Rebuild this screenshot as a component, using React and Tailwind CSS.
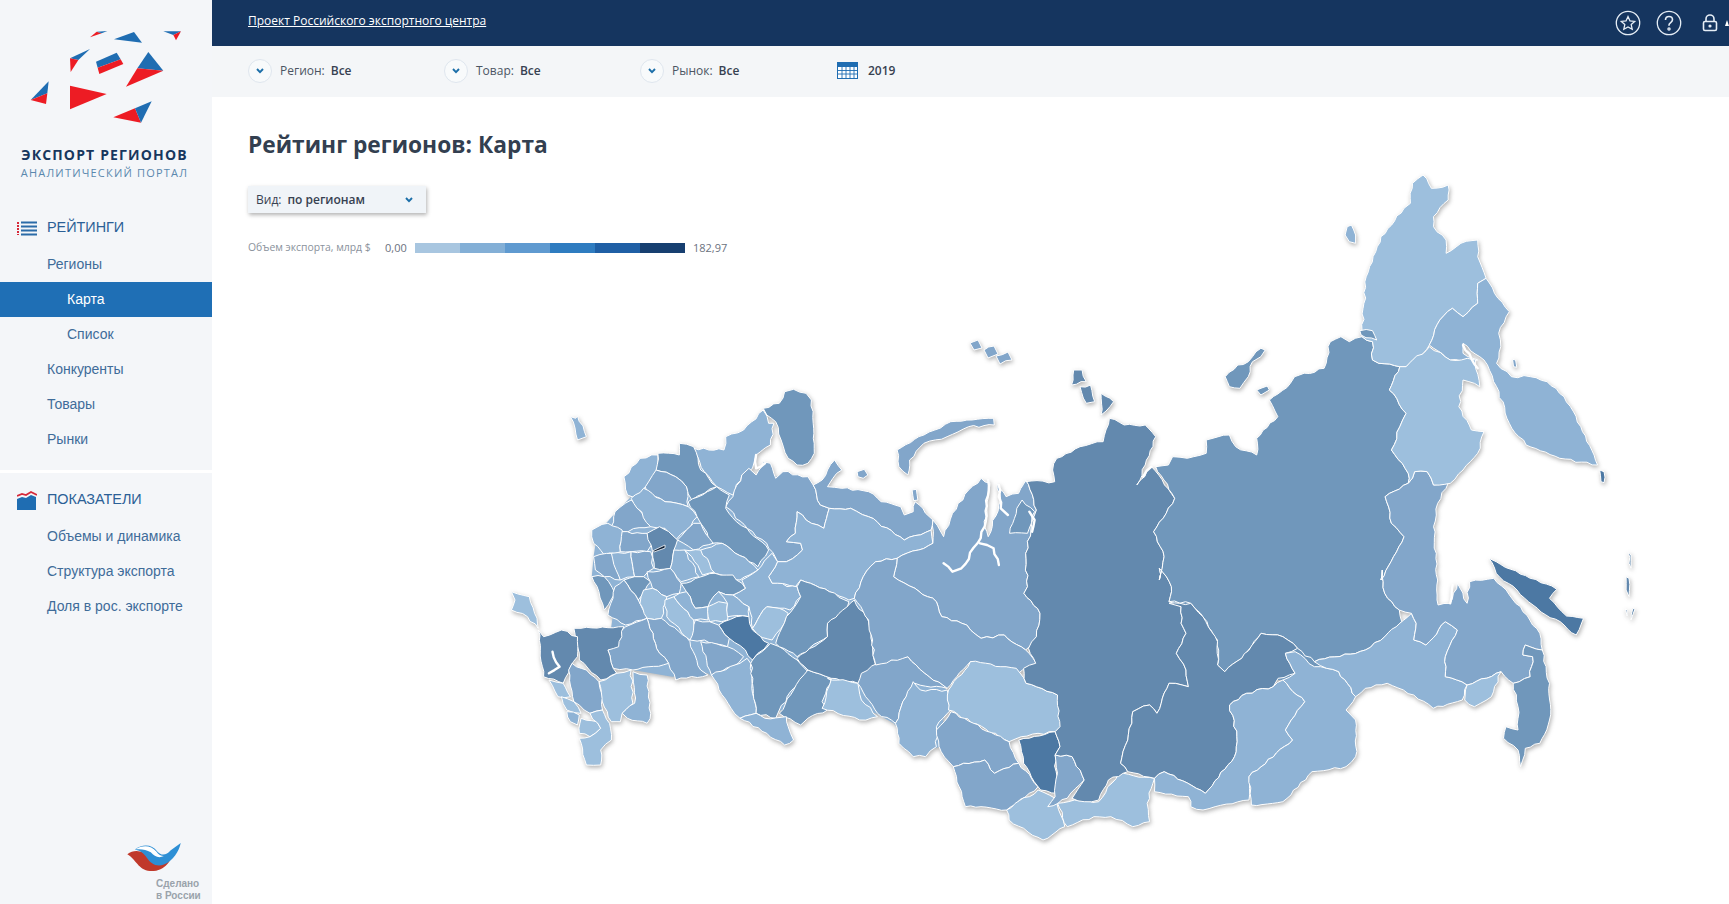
const toPts = (s, ox, oy, sx, sy = 3) =>
  s.trim().split(/\s+/).map((pair) => {
    const [x, y] = pair.split(",").map(Number);
    return [ox + x / sx, oy + y / sy];
  });
const W = (s) => toPts(s, 490, 380, 2.8);
const N = (s) => toPts(s, 1000, 160, 2.376);
const S = (s) => toPts(s, 900, 540, 2.063);
const P = (s) => toPts(s, 0, 0, 1, 1);

// roughen an edge so that two regions sharing it get the same wiggle
const noise = (n) => {
  const v = Math.sin(n * 12.9898) * 43758.5453;
  return v - Math.floor(v);
};
const roughEdge = (a, b, amp) => {
  const flip = a[0] > b[0] || (a[0] === b[0] && a[1] > b[1]);
  const [p, q] = flip ? [b, a] : [a, b];
  const dx = q[0] - p[0];
  const dy = q[1] - p[1];
  const len = Math.hypot(dx, dy);
  const steps = Math.floor(len / 5);
  const seed = p[0] * 3.1 + p[1] * 7.3 + q[0] * 11.7 + q[1] * 17.9;
  const out = [];
  for (let i = 1; i < steps; i++) {
    const t = i / steps;
    const off = (noise(seed + i) - 0.5) * 2 * amp;
    out.push([p[0] + dx * t - (dy / len) * off, p[1] + dy * t + (dx / len) * off]);
  }
  return flip ? out.reverse() : out;
};
const rough = (pts, closed = true, amp = 1.3) => {
  const out = [];
  const count = closed ? pts.length : pts.length - 1;
  for (let i = 0; i < count; i++) {
    const a = pts[i];
    const b = pts[(i + 1) % pts.length];
    out.push(a, ...roughEdge(a, b, amp));
  }
  if (!closed) out.push(pts[pts.length - 1]);
  return out.map(([x, y]) => `${x.toFixed(1)},${y.toFixed(1)}`).join(" ");
};

const L = "#9dbfdd";
const M1 = "#8fb3d5";
const M2 = "#82a6ca";
const D1 = "#7097bb";
const D2 = "#6389ae";
const D3 = "#4c78a3";

// fills what is left between neighbouring regions
const underlay = [
  [M1, W("300,460 350,400 395,350 430,300 480,240 560,220 640,330 700,300 770,280 900,320 930,380 1200,520 1100,800 1280,930 1260,1100 1200,1120 1130,1030 1080,1000 950,980 880,1010 810,990 800,1010 745,1000 610,880 510,890 400,870 340,860 330,810 345,700 285,590 290,530")],
  [D1, P("1030,500 1380,500 1380,680 1030,680")],
];

const regions = [
  // north-west
  [M1, W("225,110 240,115 245,108 270,170 245,180")],
  [D1, W("765,85 810,70 825,35 850,28 885,40 900,60 905,130 908,220 890,250 860,255 835,235 815,180 800,125 775,105")],
  [M1, W("570,205 655,210 660,170 710,150 765,90 780,130 795,130 785,195 745,225 735,265 705,285 680,345 635,320 600,275")],
  [M2, W("660,380 680,350 705,285 725,265 745,285 765,245 785,250 800,295 820,275 890,290 905,315 925,375 950,385 935,445 900,430 860,395 855,460 830,485 870,490 875,510 830,545 805,545 775,490 720,445")],
  [M2, W("905,315 930,300 945,270 965,240 985,270 960,295 945,320 985,325 1060,335 1095,365 1150,380 1160,405 1185,395 1190,365 1240,420 1235,450 1160,480 1060,410 1010,385 950,385 925,375")],
  [M1, W("950,385 1010,385 1060,410 1160,480 1235,450 1240,490 1200,510 1140,535 1080,545 1045,590 1020,655 1005,660 950,635 870,600 855,620 790,610 780,590 805,545 830,545 875,510 870,490 830,485 855,460 860,395 900,430 935,445")],
  [M2, W("1140,210 1215,165 1290,125 1410,115 1412,135 1340,140 1280,170 1215,190 1175,240 1170,285 1145,260")],
  [M2, W("1028,275 1048,268 1058,285 1045,295 1030,290")],
  [M2, W("1182,330 1194,328 1198,360 1186,362")],
  [M1, W("375,290 420,235 470,225 470,275 435,320 410,355 385,345")],
  [D1, W("470,220 530,225 530,190 570,200 590,270 635,320 600,340 565,360 550,320 520,290 465,270")],
  [M2, W("435,320 465,270 520,290 550,320 555,380 490,365 440,340")],
  [M2, W("340,440 350,395 395,360 440,420 450,440 370,455")],
  [M1, W("395,355 430,325 490,365 555,380 580,410 550,450 520,480 490,445 450,440")],
  [D1, W("555,365 635,320 670,345 660,385 690,425 720,445 780,510 750,560 725,545 650,490 620,490 590,430 580,410")],
  [M2, W("525,480 550,450 570,430 590,430 625,490 570,510")],
  [M1, W("285,450 330,430 370,450 365,515 320,525 290,490")],
  [M2, W("370,455 440,460 455,490 440,515 395,515 365,515")],
  [D2, W("440,460 475,440 510,465 525,480 515,510 505,565 460,565 455,515")],
  [M2, W("290,530 345,520 365,600 320,590 295,570")],
  [M1, W("340,520 395,515 405,590 365,600")],
  [M2, W("395,515 450,515 458,565 430,590 405,590")],
  [M1, W("515,510 545,510 585,590 535,605 505,565")],
  [L, W("545,510 590,510 635,575 595,585 565,530")],
  [M1, W("590,510 650,490 725,545 750,570 700,600 630,580")],
  [M1, W("780,590 805,545 790,520 750,570 705,600 715,625 680,645 725,680 735,745 775,680 840,690 870,650 860,620 790,610")],
  [D1, W("285,590 320,590 350,640 320,690 305,635")],
  [D1, W("375,600 405,590 430,590 450,605 415,660")],
  [M2, W("440,575 505,565 535,610 530,640 495,650 455,625")],
  [M2, W("350,620 375,600 415,660 440,715 380,735 330,705")],
  [L, W("430,630 455,625 495,650 480,715 440,715 420,670")],
  [D1, W("535,610 630,580 680,585 715,625 680,645 640,635 610,680 575,685 550,635")],
  [L, W("490,660 515,650 570,720 575,765 560,780 495,710")],
  [M1, W("515,650 550,635 575,685 610,680 610,720 570,720")],
  [L, W("610,680 640,665 665,670 665,720 615,725")],
  [M1, W("640,635 680,645 725,680 725,710 665,710 665,670")],
  [L, W("735,745 775,680 810,685 835,700 815,745 790,780 750,765")],
  [D3, W("640,735 690,710 725,710 735,750 780,790 750,820 735,840 715,810 670,775")],
  [M2, W("575,720 615,725 640,735 670,775 665,800 600,780 560,780")],
  // south
  [M2, W("440,715 480,715 560,785 590,870 610,885 520,900 500,850 475,820")],
  [M2, W("330,810 380,740 440,715 475,820 500,850 400,870 345,865")],
  [D2, W("245,800 235,745 255,745 375,740 360,800 330,810 345,865 355,880 310,900 250,840")],
  [D2, W("135,750 150,770 200,750 245,770 245,830 225,860 205,910 150,890")],
  [L, W("60,635 110,650 125,700 135,745 105,710 60,690 70,660")],
  [L, W("305,905 355,880 395,870 400,970 370,1000 365,1025 340,1025 310,950")],
  [M1, W("400,875 440,885 450,1000 440,1030 385,1015 370,1000 405,970")],
  [M2, W("220,870 230,850 270,870 305,905 315,990 280,1000 235,965")],
  [L, W("165,900 205,910 225,950 190,950")],
  [L, W("200,950 235,965 255,1000 215,990")],
  [M1, W("215,995 250,1005 245,1035 225,1025")],
  [L, W("255,1015 300,1025 310,1045 280,1070 250,1060")],
  [L, W("280,1000 315,990 335,1030 340,1080 310,1110 310,1155 270,1155 250,1075 280,1070 310,1045")],
  // volga and urals
  [M2, W("590,785 665,800 710,830 695,850 620,885")],
  [M1, W("620,885 700,850 720,835 730,850 735,940 745,1000 700,1015 675,985")],
  [D1, W("730,850 735,840 785,790 810,800 860,840 890,875 880,900 850,925 810,990 800,1015 745,1000")],
  [D1, W("890,870 955,895 940,940 930,965 945,990 890,1015 870,1035 810,1000 850,930")],
  [M1, W("700,1015 745,1000 770,1015 830,1010 835,1040 850,1080 825,1095 775,1060")],
  [D1, W("810,800 800,790 830,710 870,650 860,620 870,600 950,635 1005,665 990,700 945,730 945,770 860,830")],
  [D2, W("860,835 945,770 945,730 1020,660 1060,725 1080,855 1030,910 955,895 890,870")],
  [L, W("945,895 1030,910 1040,960 1085,1010 1035,1020 930,985 955,900")],
  [M2, W("1030,910 1040,880 1085,850 1170,830 1230,890 1280,925 1190,910 1165,950 1135,1030 1085,1000")],
  [M1, W("1135,1030 1165,950 1185,905 1205,930 1280,930 1290,990 1250,1040 1250,1100 1220,1130 1185,1130 1145,1090")],
  // west siberia
  [M2, W("1240,420 1270,470 1295,400 1340,330 1375,295 1400,310 1385,440 1395,470 1430,360 1420,310 1445,350 1480,340 1500,300 1530,390 1515,450 1500,520 1505,620 1495,640 1540,700 1530,770 1500,810 1440,765 1375,775 1335,735 1265,710 1250,665 1190,625 1130,590 1140,535 1200,510 1240,490")],
  [D1, W("1475,385 1490,360 1525,395 1505,460 1455,460")],
  [M2, W("1020,655 1045,590 1080,545 1140,535 1130,590 1190,625 1250,665 1265,710 1335,735 1375,775 1440,765 1500,810 1530,850 1480,880 1500,905 1345,845 1280,925 1230,890 1170,830 1080,855 1060,720")],
  [L, S("100,450 145,365 240,385 260,430 325,465 335,560 320,575 250,590 225,605 100,510")],
  [M2, S("75,570 105,515 225,605 245,670 195,700 175,660 110,680 85,635")],
  [M2, S("110,680 175,660 195,700 245,670 285,740 220,810 135,800")],
  [L, S("220,810 285,750 320,775 340,860 295,900 225,840")],
  [D3, S("245,600 320,575 330,620 320,645 325,760 290,750 255,670")],
  [M2, S("320,645 355,650 380,720 345,775 305,800 320,770 325,700")],
  [L, S("325,790 360,780 410,785 450,700 525,715 510,790 515,845 480,860 435,830 400,830 345,860")],
  // krasnoyarsk
  [D2, [
    ...N("60,965 130,965 125,930 135,895 190,860 245,845 260,775 295,795 345,795 370,830 345,915 325,975 360,920 415,1015 395,1060 365,1115 390,1190"),
    ...S("535,120 535,85 560,140 555,185 580,200 580,250 590,280 570,340 590,390 595,440 555,430 530,520 515,495 480,515 470,600 455,670 470,695 430,720 410,780 380,785 355,775 380,720 355,650 320,645 330,620 320,575 330,560 325,465 260,430 255,385 280,370 265,325"),
    ...W("1530,770 1540,700 1495,640 1505,620 1500,520 1515,450 1530,390 1500,300"),
  ]],
  // yakutia
  [D1, [
    ...N("370,920 400,915 410,890 445,895 490,880 490,840 545,825 560,860 610,885 610,835 660,770 640,720 690,670 700,650 770,625 785,545 810,530 830,545 860,530 885,545 885,600 900,610 950,620 925,690 965,760 950,800 930,870 970,940 970,970 915,1010 930,1090 960,1130 935,1190 905,1260"),
    ...S("995,90 1000,160 1030,210 1035,245 1000,290 960,330 855,365 820,325 790,290 745,280 725,320 705,355 670,395 655,375 655,300 620,220 600,190 555,185 560,140 535,85 535,120"),
    ...N("390,1190 365,1115 395,1060 415,1015"),
  ]],
  [D2, S("555,190 600,190 625,230 655,305 655,375 670,395 705,355 745,280 790,290 820,325 795,340 815,400 780,415 770,440 715,460 680,495 695,590 690,650 630,760 545,695 525,715 470,695 455,670 470,600 480,515 515,495 530,520 555,430 595,440 590,390 570,340 590,280 580,250 580,200")],
  [M1, S("525,715 545,695 630,760 690,650 695,590 680,495 715,460 770,440 790,420 835,485 795,570 810,600 720,710 720,780 650,800 625,810 600,800 595,770 525,755")],
  [M1, S("720,710 810,600 795,570 835,485 790,420 815,400 795,340 815,335 855,380 880,385 905,395 940,470 920,510 940,540 940,650 920,680 850,695 790,785 725,795")],
  [M1, S("855,365 960,330 1000,290 1055,220 1065,250 1060,300 1085,315 1125,245 1150,270 1125,350 1125,410 1170,435 1160,480 1100,505 1060,465 1005,430 960,445 940,470 905,395 880,385")],
  // far east
  [M2, [
    ...N("905,1260 935,1190 960,1130 930,1090 915,1010 970,970 985,935 1015,935 1030,975 1065,970 1040,1030 1030,1100 1040,1260"),
    ...S("1110,195 1135,190 1150,130 1170,190 1175,125 1225,115 1280,200 1320,280 1325,330 1290,315 1285,345 1305,350 1300,410 1265,430 1240,395 1170,435 1125,410 1125,350 1150,270 1125,245 1085,315 1060,300 1065,250 1055,220 1030,210 1000,160 995,90"),
  ]],
  [L, S("1170,435 1240,395 1220,470 1185,500 1165,480")],
  [D1, S("1265,430 1300,410 1305,350 1285,345 1290,315 1325,330 1340,430 1340,540 1320,610 1290,625 1280,680 1275,630 1245,595 1250,560 1275,570 1275,500")],
  [D3, S("1215,55 1230,65 1300,115 1355,148 1340,175 1375,228 1410,235 1395,285 1370,255 1315,205 1255,130 1230,100")],
  [L, N("860,510 870,350 905,230 960,145 975,130 980,70 1005,45 1025,85 1065,75 1065,120 1030,170 1030,200 1060,240 1060,280 1095,250 1135,240 1135,290 1155,355 1135,370 1135,430 1100,470 1075,445 1045,480 1020,555 995,590 965,620 950,620 900,610 885,600 885,545 860,530")],
  [D1, N("855,512 885,512 895,540 858,525")],
  [M1, N("1155,355 1175,400 1210,455 1185,520 1190,560 1180,610 1215,650 1260,650 1300,665 1340,710 1380,800 1420,915 1330,895 1250,855 1210,790 1180,680 1150,600 1100,550 1100,580 1135,600 1070,600 1020,555 1045,480 1075,445 1100,470 1135,430 1135,370")],
  [L, N("950,620 965,620 1020,560 1070,600 1110,595 1130,600 1130,625 1140,680 1100,660 1090,740 1120,810 1150,815 1135,880 1100,930 1070,970 1030,975 1015,935 985,935 970,970 970,940 930,870 950,800 965,760 925,690")],
  // islands
  [M1, N("825,200 835,195 845,225 845,250 830,245 820,225")],
  [D1, N("535,650 565,615 590,605 600,590 620,565 630,570 620,590 600,605 590,650 570,685 545,680")],
  [D1, N("610,690 635,678 640,690 620,705")],
  [D2, N("175,630 195,630 205,665 170,675")],
  [D2, N("190,680 215,675 225,725 205,730")],
  [D2, N("240,700 270,725 240,765")],
  [M2, N("1218,598 1225,600 1228,622 1220,620")],
  [D3, N("1425,930 1435,935 1435,968 1428,965")],
  [M2, P("970,343 978,340 982,348 974,350")],
  [M2, P("984,350 994,346 998,354 988,358")],
  [M2, P("996,356 1008,352 1012,360 1000,364")],
  [D2, S("1502,35 1508,45 1508,85 1504,70")],
  [D2, S("1498,110 1504,115 1504,170 1498,150")],
  [D2, S("1496,205 1500,210 1500,228")],
  [D2, S("1512,205 1516,208 1508,240")],
];

// white inlets: gulfs cut out of the regions
const inlets = [
  W("1395,300 1385,440 1365,490 1320,565 1295,575 1270,550"),
  W("1372,490 1410,505 1425,555"),
  W("1425,315 1430,385 1450,405"),
  W("1510,395 1525,420 1518,455"),
  W("175,815 195,860 165,880"),
  W("745,225 745,265 770,250"),
  N("1100,555 1135,625"),
  S("1140,135 1135,190"),
  N("360,920 340,950"),
];

function LogoTriangles() {
  return (
    <svg className="block w-[212px] h-[130px]" viewBox="0 0 636 390">
      <polygon points="270,112 290,95 305,100" fill="#ed1c24" />
      <polygon points="290,95 322,93 305,100" fill="#1f6db2" />
      <polygon points="342,118 402,96 426,128" fill="#1f6db2" />
      <polygon points="490,94 543,94 520,105" fill="#1f6db2" />
      <polygon points="520,105 543,94 528,121" fill="#ed1c24" />
      <polygon points="210,175 270,147 235,180" fill="#1f6db2" />
      <polygon points="210,175 235,180 212,216" fill="#ed1c24" />
      <polygon points="288,185 350,158 362,178 293,203" fill="#1f6db2" />
      <polygon points="293,203 362,178 370,192 298,222" fill="#ed1c24" />
      <polygon points="445,156 490,212 412,205" fill="#1f6db2" />
      <polygon points="412,205 490,212 378,260" fill="#ed1c24" />
      <polygon points="92,300 146,244 142,280" fill="#1f6db2" />
      <polygon points="92,300 142,280 138,312" fill="#ed1c24" />
      <polygon points="210,257 320,282 210,328" fill="#ed1c24" />
      <polygon points="340,352 405,325 423,368" fill="#ed1c24" />
      <polygon points="405,325 455,304 423,368" fill="#1f6db2" />
    </svg>
  );
}

function ListIcon() {
  return (
    <svg width="20" height="15" viewBox="0 0 20 15">
      <path d="M1 1v13" stroke="#d6293a" strokeWidth="2" strokeDasharray="2 1" />
      <path d="M4 1.5h16M4 5.5h16M4 9.5h16M4 13.5h16" stroke="#2a6ba8" strokeWidth="2.2" />
    </svg>
  );
}

function ChartIcon() {
  return (
    <svg width="20" height="20" viewBox="0 0 20 20">
      <path d="M0 6l5-2 4 1 5-3 6 3" fill="none" stroke="#d6293a" strokeWidth="1.8" />
      <path d="M0 9l5-2 4 1 5-3 5 2v13H0z" fill="#1f6db2" />
    </svg>
  );
}

function Chevron() {
  return (
    <svg width="8" height="6" viewBox="0 0 8 6">
      <path d="M1 1l3 3.2L7 1" fill="none" stroke="#1b6ea8" strokeWidth="1.9" />
    </svg>
  );
}

function Filter({ label }) {
  return (
    <div className="w-[196px] flex items-center">
      <span className="w-[24px] h-[24px] rounded-full border border-[#dfe6ee] bg-[#f8fafb] flex items-center justify-center mr-[8px]">
        <Chevron />
      </span>
      <span className="text-[#4b5563]">{label}:</span>
      <span className="ml-[6px] font-semibold text-[#374151]">Все</span>
    </div>
  );
}

function NavItem({ children, active, sub }) {
  return (
    <a
      className={
        "h-[35px] flex items-center " +
        (sub ? "pl-[67px] " : "pl-[47px] ") +
        (active ? "bg-[#1f6fb5] text-white" : "text-[#3f6c99]")
      }
    >
      {children}
    </a>
  );
}

function CircleIcon({ children }) {
  return (
    <svg width="26" height="26" viewBox="0 0 26 26" fill="none" stroke="#e6eef6" strokeWidth="1.3">
      <circle cx="13" cy="13" r="11.7" />
      {children}
    </svg>
  );
}

export default function App() {
  return (
    <div className="flex w-full h-[904px] overflow-hidden bg-white font-['Open_Sans',sans-serif]">
      <aside className="w-[212px] shrink-0 bg-[#f4f6f9] flex flex-col font-['Liberation_Sans',sans-serif] text-[14px]">
        <LogoTriangles />
        <div className="h-[57px] pt-[16px] pr-[3px] text-center font-['Open_Sans',sans-serif]">
          <div className="text-[14px] leading-[18px] font-bold tracking-[1.15px] text-[#17375e]">ЭКСПОРТ РЕГИОНОВ</div>
          <div className="text-[11px] leading-[18px] tracking-[1.2px] text-[#5a88ae]">АНАЛИТИЧЕСКИЙ ПОРТАЛ</div>
        </div>
        <div className="h-[24px]" />
        <div className="h-[36px] pb-[2px] flex items-center pl-[17px] text-[14.4px] text-[#2b6096]">
          <span className="w-[30px] flex"><ListIcon /></span>
          РЕЙТИНГИ
        </div>
        <NavItem>Регионы</NavItem>
        <NavItem sub active>Карта</NavItem>
        <NavItem sub>Список</NavItem>
        <NavItem>Конкуренты</NavItem>
        <NavItem>Товары</NavItem>
        <NavItem>Рынки</NavItem>
        <div className="h-[16px] border-b-[3px] border-white" />
        <div className="h-[46px] pt-[8px] flex items-center pl-[17px] text-[14.4px] text-[#2b6096]">
          <span className="w-[30px] flex"><ChartIcon /></span>
          ПОКАЗАТЕЛИ
        </div>
        <NavItem>Объемы и динамика</NavItem>
        <NavItem>Структура экспорта</NavItem>
        <NavItem>Доля в рос. экспорте</NavItem>
        <div className="mt-auto pb-[2px] pr-[10px] flex flex-col items-end">
          <svg width="55" height="30" viewBox="0 0 58 32" className="mr-[20px]">
            <path d="M0 13c8-6 18-3 25 3 6 4 14 2 18-3l6-4c-1 10-9 23-25 22C12 30 9 18 0 13z" fill="#c0392b" />
            <path d="M8 8c8-6 18-6 24 2 4 5 10 4 14-1l11-8c-2 9-8 19-18 23-8 3-14-1-18-7C17 11 13 9 8 8z" fill="#2d8fd5" />
            <path d="M8 8c8-5 17-5 23 2 2 3 5 5 8 5-6 3-10 0-14-4-5-3-11-4-17-3z" fill="#ffffff" />
          </svg>
          <div className="mt-[6px] text-[10px] leading-[12px] font-bold text-[#9aa3ab] w-[46px]">
            Сделано
            <br />
            в России
          </div>
        </div>
      </aside>

      <div className="flex-1 min-w-0 flex flex-col">
        <header className="h-[46px] shrink-0 bg-[#15355f] pl-[36px] flex items-center justify-between text-white">
          <a className="text-[12px] underline mb-[4px]">Проект Российского экспортного центра</a>
          <div className="flex items-center">
            <CircleIcon>
              <path d="M13 6.5l2 4.4 4.7.5-3.5 3.2 1 4.7-4.2-2.4-4.2 2.4 1-4.7-3.5-3.2 4.7-.5z" />
            </CircleIcon>
            <span className="ml-[15px] flex">
              <CircleIcon>
                <path d="M9.5 10c0-2.2 1.5-3.5 3.5-3.5s3.5 1.3 3.5 3.2c0 2.8-3.5 2.8-3.5 5.3v.8" strokeWidth="1.6" />
                <circle cx="13" cy="19" r="1.1" />
              </CircleIcon>
            </span>
            <svg width="16" height="18" viewBox="0 0 16 18" fill="none" stroke="#e6eef6" strokeWidth="1.6" className="ml-[20px]">
              <rect x="1.5" y="7.5" width="13" height="9" rx="1.5" />
              <path d="M4 7.5V5a4 4 0 0 1 8 0v2.5" />
              <circle cx="8" cy="12" r="0.8" />
            </svg>
            <span className="ml-[7px] w-0 h-0 border-l-[2px] border-r-[2px] border-b-[6px] border-l-transparent border-r-transparent border-b-white" />
          </div>
        </header>

        <div className="h-[51px] shrink-0 bg-[#f4f6f8] pl-[36px] pb-[2px] flex items-center text-[12px]">
          <Filter label="Регион" />
          <Filter label="Товар" />
          <Filter label="Рынок" />
          <svg width="21" height="17" viewBox="0 0 21 17" className="ml-[1px]">
            <rect width="21" height="17" fill="#1f6db2" />
            <rect x="1" y="5" width="19" height="11" fill="#ffffff" />
            <path d="M1 8.5h19M1 12h19M5 5v11M9 5v11M13 5v11M17 5v11" stroke="#1f6db2" strokeWidth="0.9" />
          </svg>
          <span className="ml-[10px] font-semibold text-[#374151]">2019</span>
        </div>

        <main className="relative flex-1 pl-[36px] pt-[32px]">
          <h1 className="text-[22.75px] leading-[32px] font-bold text-[#333f50]">Рейтинг регионов: Карта</h1>
          <div className="mt-[25px] w-[178px] h-[27px] bg-[#f0f4f8] shadow-[1px_2px_4px_rgba(0,0,0,0.3)] flex items-center pl-[8px] pr-[13px] text-[12px] text-[#374151]">
            <span>Вид:</span>
            <span className="ml-[6px] font-semibold">по регионам</span>
            <span className="ml-auto flex"><Chevron /></span>
          </div>
          <div className="mt-[26px] flex items-center text-[#6b7280]">
            <span className="w-[137px] pt-[1px] text-[10.4px] text-[#8a929c]">Объем экспорта, млрд $</span>
            <span className="w-[30px] pt-[1px] text-[11px]">0,00</span>
            <div className="flex h-[10px]">
              <div className="w-[45px] bg-[#a8c6e0]" />
              <div className="w-[45px] bg-[#83afd6]" />
              <div className="w-[45px] bg-[#5f9ad0]" />
              <div className="w-[45px] bg-[#2f7cc0]" />
              <div className="w-[45px] bg-[#1f5fa5]" />
              <div className="w-[45px] bg-[#173f70]" />
            </div>
            <span className="ml-[8px] pt-[1px] text-[11px]">182,97</span>
          </div>

          {/* the map is drawn in page coordinates, hence the viewBox */}
          <svg
            className="absolute left-0 top-0 w-[1517px] h-[807px] pointer-events-none drop-shadow-[1px_2px_2px_rgba(40,40,40,0.35)]"
            viewBox="212 97 1517 807"
          >
            {underlay.map(([fill, pts], i) => (
              <polygon key={i} points={pts.map((p) => p.join(",")).join(" ")} fill={fill} />
            ))}
            {regions.map(([fill, pts], i) => (
              <polygon key={i} points={rough(pts)} fill={fill} stroke="#ffffff" strokeWidth="1" strokeLinejoin="round" />
            ))}
            {inlets.map((pts, i) => (
              <polyline key={i} points={rough(pts, false)} fill="none" stroke="#ffffff" strokeWidth="2.4" strokeLinejoin="round" strokeLinecap="round" />
            ))}
            <polygon points="652.5,551 665,545 665,548 654,552" fill="#0b1c33" stroke="#ffffff" strokeWidth="0.8" />
          </svg>
        </main>
      </div>
    </div>
  );
}
